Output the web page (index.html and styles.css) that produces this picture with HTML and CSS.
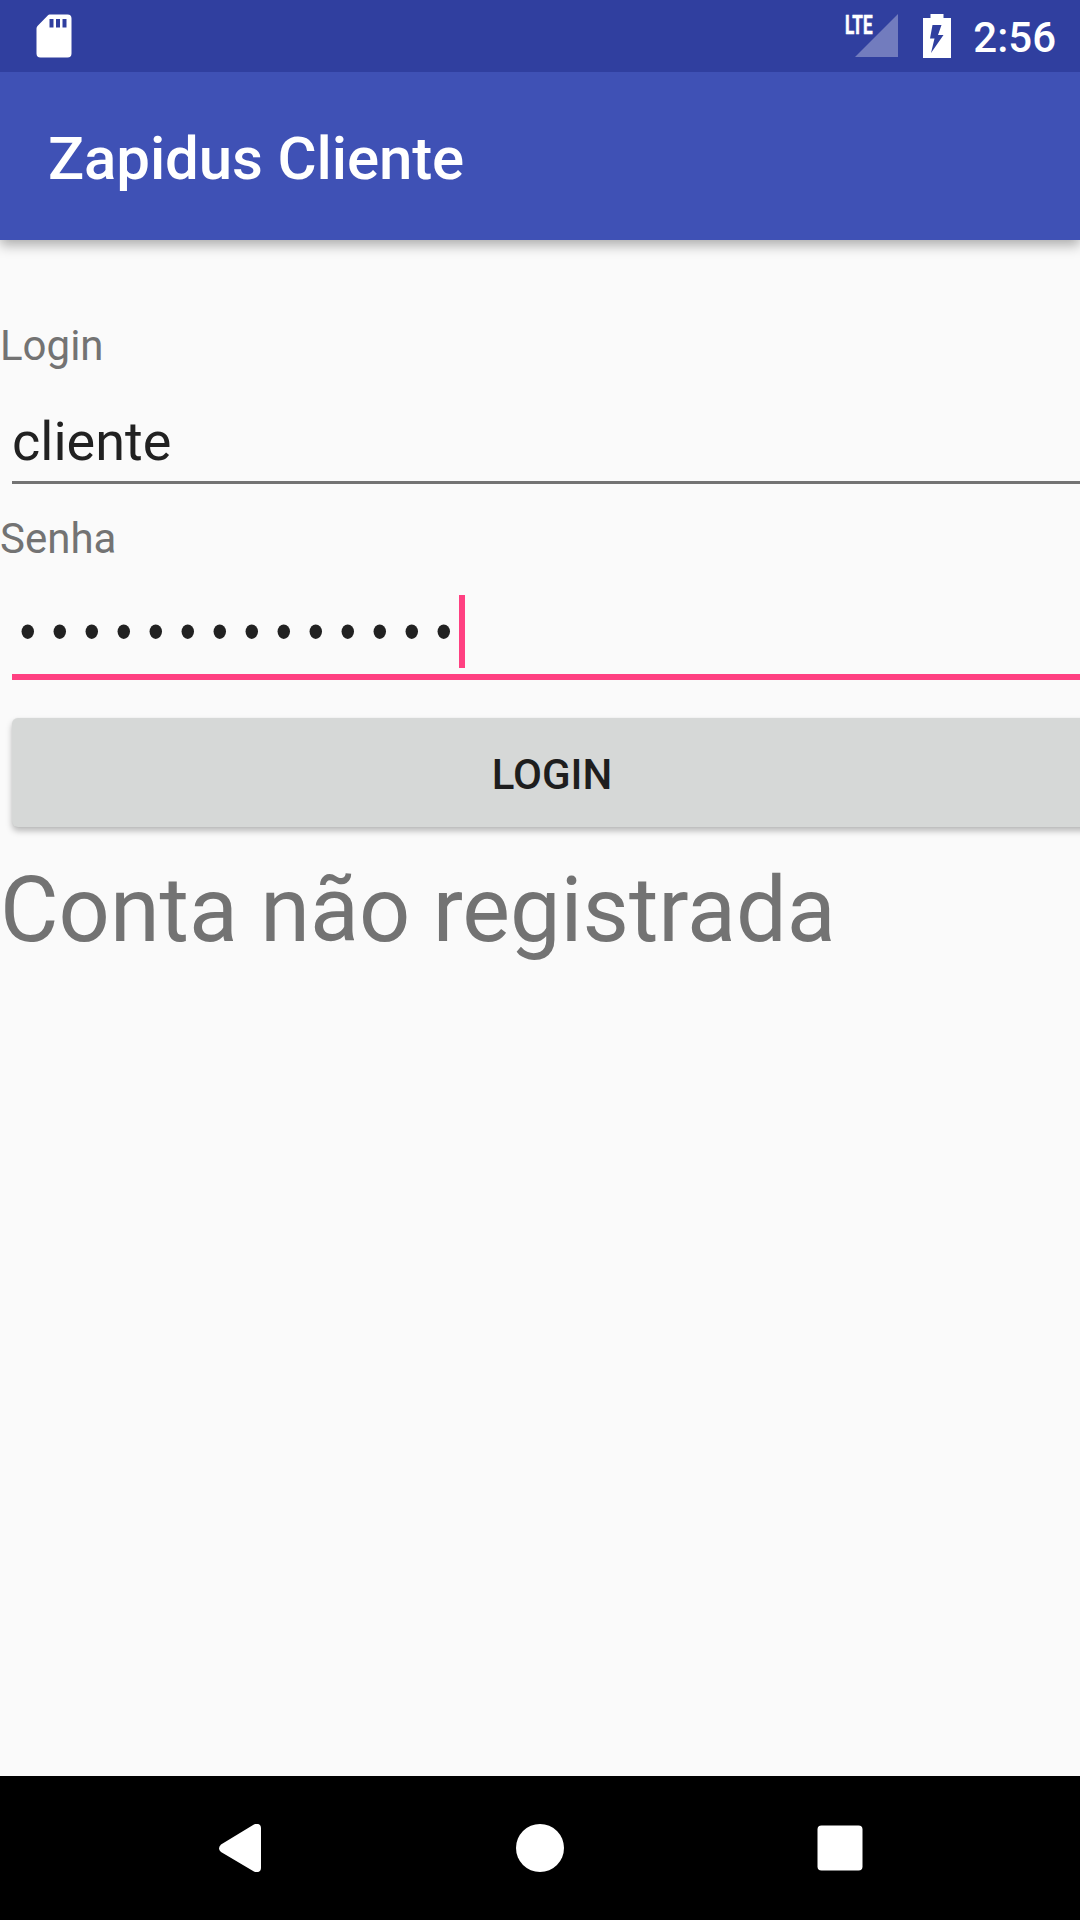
FILE: index.html
```html
<!DOCTYPE html>
<html lang="pt-BR">
<head>
<meta charset="utf-8">
<title>Zapidus Cliente</title>
<link rel="stylesheet" href="styles.css">
</head>
<body>
<div class="screen">
  <header class="status-bar">
    <svg class="sd-icon" viewBox="0 0 36 44" width="36" height="44">
      <path fill="#fff" fill-rule="evenodd" d="M13.500 .5H31.500a4 4 0 0 1 4 4V39.500a4 4 0 0 1-4 4H4.500a4 4 0 0 1-4-4V14.500q0-1.500 1-2.500L12 1.200q.7-.7 1.500-.7ZM13.500 5v8.500h4V5ZM20 5v8.500h4V5ZM26.500 5v8.500h4V5Z"/>
    </svg>
    <div class="status-right">
      <svg class="signal-icon" viewBox="-2 0 56 44" width="56" height="44">
        <path fill="#fff" fill-opacity=".32" d="M53 0V43H10Z"/>
        <text class="lte" x="0" y="19.500" textLength="27.500" lengthAdjust="spacingAndGlyphs">LTE</text>
      </svg>
      <svg class="battery-icon" viewBox="0 0 28 44" width="28" height="44">
        <path fill="#fff" fill-rule="evenodd" d="M7.500 0H20.500V4H28V44H0V4H7.500ZM9.500 11 7 24.500H11.500L8 39 20.500 21H15L18.500 11Z"/>
      </svg>
      <span class="clock">2:56</span>
    </div>
  </header>
  <div class="app-bar"><h1 class="title">Zapidus Cliente</h1></div>
  <main class="content">
    <div class="label">Login</div>
    <div class="field">cliente</div>
    <div class="label label-password">Senha</div>
    <div class="field field-focused">
      <span class="dots">••••••••••••••</span>
      <span class="cursor"></span>
    </div>
    <div class="button">LOGIN</div>
    <div class="message">Conta não registrada</div>
  </main>
  <nav class="nav-bar">
    <svg viewBox="0 0 48 48" width="48" height="48"><path fill="#fff" d="M37.500 .8C40 -.8 45 -.8 45 4V44C45 48.800 40 48.800 37.500 47.200L5 28Q1 24.500 5 20.500Z"/></svg>
    <svg viewBox="0 0 48 48" width="48" height="48"><circle fill="#fff" cx="24" cy="24" r="24"/></svg>
    <svg viewBox="0 0 48 48" width="48" height="48"><rect fill="#fff" x="1.500" y="1.500" width="45" height="45" rx="4"/></svg>
  </nav>
</div>
</body>
</html>
```
FILE: styles.css
```css
body {
  margin: 0;
  font-family: Roboto, sans-serif;
  background: #fafafa;
}

.screen {
  display: flex;
  flex-direction: column;
  width: 1080px;
  height: 1920px;
  overflow: hidden;
}

.status-bar {
  position: relative;
  z-index: 2;
  display: flex;
  flex: none;
  justify-content: space-between;
  box-sizing: border-box;
  height: 72px;
  padding: 14px 24px 0 36px;
  background: #303f9f;
}

.status-right {
  display: flex;
}

.signal-icon {
  overflow: visible;
}

.battery-icon {
  margin-left: 24px;
}

.lte {
  font: 700 26px Roboto, sans-serif;
  fill: #fff;
  stroke: #fff;
  stroke-width: 0.6px;
}

.clock {
  margin-left: 22px;
  font-size: 42px;
  font-weight: 500;
  line-height: 48px;
  color: #fff;
}

.app-bar {
  position: relative;
  z-index: 1;
  display: flex;
  flex: none;
  align-items: center;
  box-sizing: border-box;
  height: 168px;
  padding: 5px 48px 0;
  background: #3f51b5;
  box-shadow: 0 5px 12px rgba(0, 0, 0, 0.32);
}

.title {
  margin: 0;
  font-size: 60px;
  font-weight: 500;
  line-height: 70px;
  letter-spacing: -0.12px;
  color: #fff;
}

/* The form is wider than the screen and runs off its right edge. */
.content {
  flex: 1;
  width: 1104px;
  padding-top: 81px;
}

.label {
  font-size: 42px;
  line-height: 50px;
  color: #737373;
}

.label-password {
  margin-top: 30px;
}

.field {
  margin: 0 12px;
  padding: 39px 0 7px;
  border-bottom: 3px solid #737373;
  font-size: 54px;
  line-height: 64px;
  color: #212121;
}

.field-focused {
  display: flex;
  height: 73px;
  padding: 31px 0 6px;
  border-bottom: 6px solid #ff4081;
}

.dots {
  width: 445px;
  padding-left: 2px;
  font-family: "Liberation Mono", monospace;
  font-size: 46px;
  line-height: 82px;
  letter-spacing: 4.4px;
  white-space: nowrap;
  transform: scaleY(1.15);
}

.cursor {
  width: 6px;
  height: 73px;
  background: #ff4081;
}

.button {
  margin: 38px 12px 0;
  height: 109px;
  border-radius: 6px;
  background: #d6d8d7;
  box-shadow: 0 4px 6px rgba(0, 0, 0, 0.26), 0 0 2px rgba(0, 0, 0, 0.06);
  font-size: 42px;
  font-weight: 500;
  line-height: 113px;
  text-align: center;
  color: #1e1e1e;
}

.message {
  margin-top: 31px;
  font-size: 90px;
  line-height: 106px;
  color: #737373;
}

.nav-bar {
  display: flex;
  flex: none;
  align-items: center;
  justify-content: center;
  gap: 252px;
  height: 144px;
  background: #000;
}
```
